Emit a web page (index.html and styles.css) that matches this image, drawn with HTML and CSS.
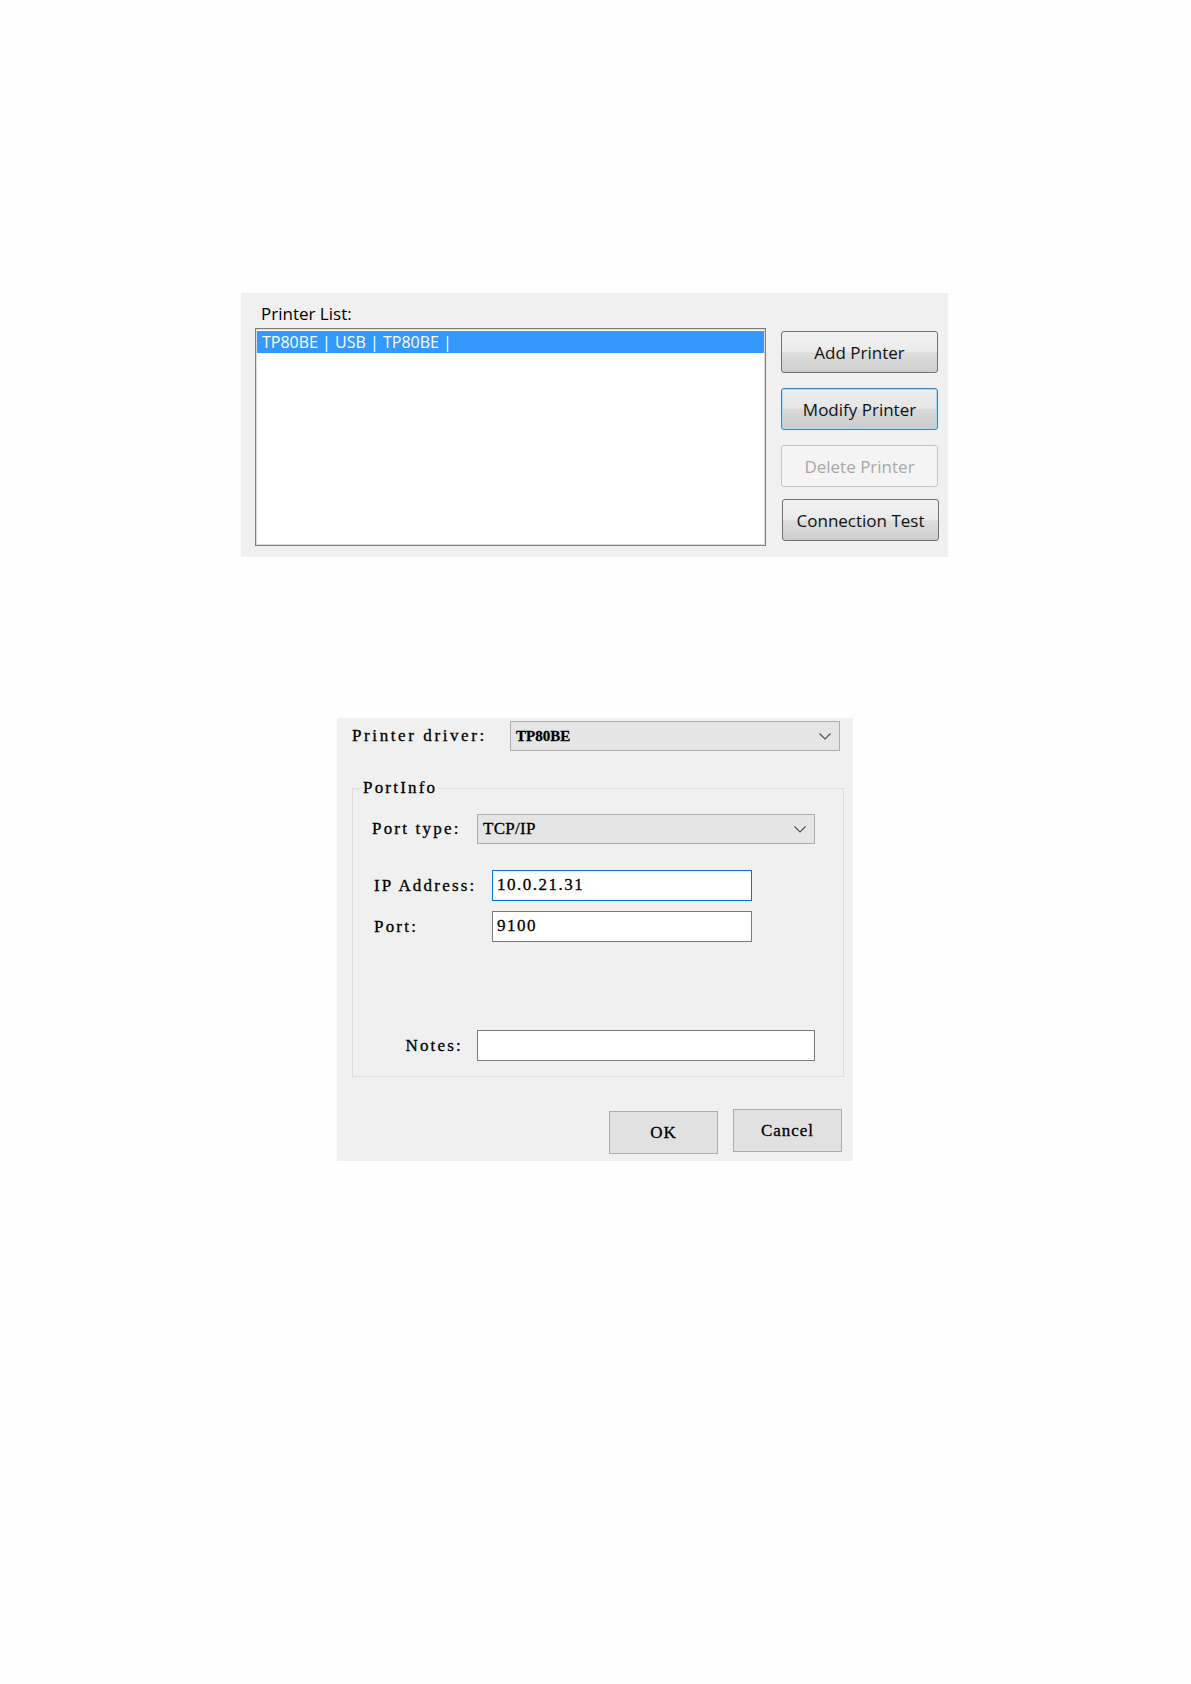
FILE: index.html
```html
<!DOCTYPE html>
<html lang="en">
<head>
<meta charset="UTF-8" />
<meta name="viewport" content="width=device-width, initial-scale=1" />
<title>Printer Settings</title>
<link rel="stylesheet" href="styles.css">
</head>
<body>

<div class="page">

  <!-- Lista de impressoras -->
  <section class="printer-panel">
    <div class="panel-label">Printer List:</div>
    <div class="panel-body">
      <div class="printer-list">
        <div class="list-row selected">TP80BE | USB | TP80BE |</div>
      </div>
      <div class="panel-buttons">
        <button class="aero-btn">Add Printer</button>
        <button class="aero-btn default">Modify Printer</button>
        <button class="aero-btn" disabled>Delete Printer</button>
        <button class="aero-btn test-btn">Connection Test</button>
      </div>
    </div>
  </section>

  <!-- Dialogo de porta -->
  <section class="port-dialog">
    <div class="driver-row">
      <span class="field-label driver-label">Printer driver:</span>
      <div class="combo combo-driver">
        <span class="combo-text bold">TP80BE</span>
        <svg class="chevron" width="12" height="7" viewBox="0 0 12 7"><polyline points="0.5,0.5 6,6 11.5,0.5" /></svg>
      </div>
    </div>

    <fieldset class="port-group">
      <legend>PortInfo</legend>

      <div class="group-row type-row">
        <span class="field-label type-label">Port type:</span>
        <div class="combo combo-type">
          <span class="combo-text">TCP/IP</span>
          <svg class="chevron" width="12" height="7" viewBox="0 0 12 7"><polyline points="0.5,0.5 6,6 11.5,0.5" /></svg>
        </div>
      </div>

      <div class="group-row ip-row">
        <span class="field-label addr-label">IP Address:</span>
        <div class="text-box focused">10.0.21.31</div>
      </div>

      <div class="group-row port-row">
        <span class="field-label addr-label">Port:</span>
        <div class="text-box">9100</div>
      </div>

      <div class="group-row notes-row">
        <span class="field-label notes-label">Notes:</span>
        <div class="text-box notes-box"></div>
      </div>
    </fieldset>

    <div class="dialog-buttons">
      <button class="win-btn ok-btn">OK</button>
      <button class="win-btn">Cancel</button>
    </div>
  </section>

</div>

</body>
</html>
```

FILE: styles.css
```css
body {
  margin: 0;
  background: #fefefe;
}
.page {
  padding-top: 293px;
  padding-bottom: 40px;
}

/* Painel - Printer List */
.printer-panel {
  margin-left: 241px;
  width: 707px;
  height: 264px;
  box-sizing: border-box;
  background: #f0f0f0;
  padding: 11px 0 0 14px;
  font-family: 'Open Sans', 'Noto Sans', sans-serif;
  color: #000;
}
.panel-label {
  font-size: 17px;
  line-height: 20px;
  padding-left: 6px;
  margin-bottom: 4px;
}
.panel-body {
  display: flex;
  gap: 15px;
}
.printer-list {
  width: 511px;
  height: 218px;
  box-sizing: border-box;
  border: 1px solid #7f7f7f;
  box-shadow: inset 0 0 0 1px #dadada;
  background: #fff;
  padding: 2px 1px;
}
.list-row {
  height: 22px;
  line-height: 22px;
  padding-left: 5px;
  font-size: 16px;
  white-space: nowrap;
}
.list-row.selected {
  background: #3399ff;
  color: #fff;
}
.panel-buttons {
  display: flex;
  flex-direction: column;
  padding-top: 3px;
}
.aero-btn {
  width: 157px;
  height: 42px;
  margin-bottom: 15px;
  border: 1px solid #707070;
  border-radius: 3px;
  background: linear-gradient(#f2f2f2 0%, #ebebeb 48%, #dddddd 52%, #cfcfcf 100%);
  font-family: 'Open Sans', 'Noto Sans', sans-serif;
  font-size: 17px;
  color: #111;
  padding: 0;
  cursor: pointer;
}
.aero-btn.default {
  border-color: #3c7fb1;
  box-shadow: inset 0 0 0 1px #a8dcf7;
  background: linear-gradient(#eeeeee 0%, #e6e6e6 48%, #d8d8d8 52%, #cccccc 100%);
}
.aero-btn:disabled {
  border-color: #c4c7c9;
  background: #f4f4f4;
  color: #a8a8a8;
  cursor: default;
}
.aero-btn.test-btn {
  margin-top: -3px;
  margin-left: 1px;
}

/* Dialogo - Port info */
.port-dialog {
  margin-top: 161px;
  margin-left: 337px;
  width: 516px;
  height: 443px;
  box-sizing: border-box;
  background: #f0f0f0;
  padding: 3px 11px 0 15px;
  font-family: 'Liberation Serif', serif;
  font-size: 17px;
  letter-spacing: 2.2px;
  -webkit-text-stroke: 0.3px #000;
  color: #000;
}
.driver-row {
  display: flex;
  align-items: center;
}
.field-label {
  white-space: nowrap;
  flex: none;
}
.driver-label {
  width: 158px;
  letter-spacing: 2.6px;
}
.combo {
  display: flex;
  align-items: center;
  justify-content: space-between;
  height: 30px;
  box-sizing: border-box;
  border: 1px solid #adadad;
  background: #e5e5e5;
  padding: 0 8px 0 5px;
}
.combo-driver {
  width: 330px;
}
.combo-text {
  letter-spacing: 0.3px;
}
.combo-text.bold {
  font-weight: 700;
  font-size: 15px;
  letter-spacing: 0;
}
.chevron {
  display: block;
}
.chevron polyline {
  fill: none;
  stroke: #505050;
  stroke-width: 1.2;
}
.port-group {
  width: 492px;
  box-sizing: border-box;
  margin: 28px 0 0 0;
  padding: 0 0 15px 0;
  border: 1px solid #dcdcdc;
  min-inline-size: 0;
}
.port-group legend {
  margin-left: 8px;
  padding: 0 2px;
  line-height: 18px;
}
.group-row {
  display: flex;
  align-items: center;
}
.type-row {
  margin-top: 17px;
  padding-left: 19px;
}
.type-label {
  width: 105px;
}
.combo-type {
  width: 338px;
}
.ip-row {
  margin-top: 26px;
  padding-left: 21px;
}
.port-row {
  margin-top: 10px;
  padding-left: 21px;
}
.addr-label {
  width: 118px;
}
.text-box {
  width: 260px;
  height: 31px;
  box-sizing: border-box;
  border: 1px solid #7a7a7a;
  background: #fff;
  padding-left: 4px;
  line-height: 27px;
  letter-spacing: 1.5px;
}
.text-box.focused {
  border-color: #0078d7;
}
.notes-row {
  margin-top: 88px;
}
.notes-label {
  width: 124px;
  box-sizing: border-box;
  text-align: right;
  padding-right: 14px;
}
.text-box.notes-box {
  width: 338px;
}
.dialog-buttons {
  display: flex;
  justify-content: flex-end;
  gap: 15px;
  margin-top: 32px;
}
.win-btn {
  width: 109px;
  height: 43px;
  border: 1px solid #adadad;
  background: #e1e1e1;
  font-family: 'Liberation Serif', serif;
  font-size: 17px;
  letter-spacing: 1px;
  -webkit-text-stroke: 0.3px #000;
  color: #000;
  padding: 0;
}
.win-btn.ok-btn {
  margin-top: 2px;
}
```
